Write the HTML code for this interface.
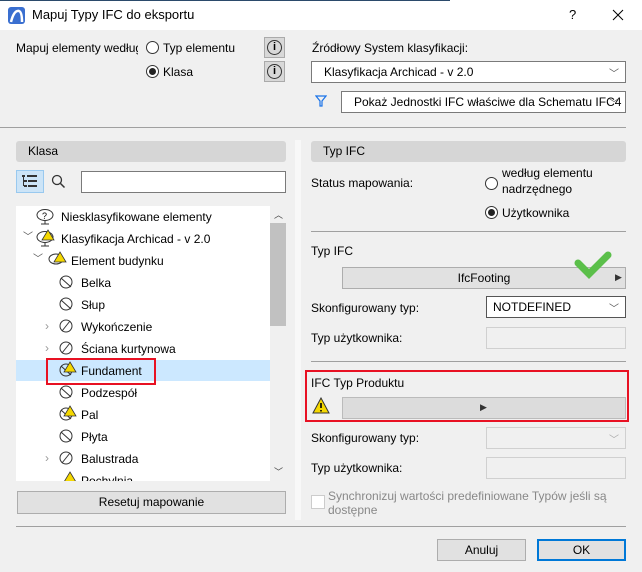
<!DOCTYPE html>
<html><head><meta charset="utf-8"><style>
*{box-sizing:border-box;margin:0;padding:0}
body{width:642px;height:572px;overflow:hidden;background:#f0f0f0;font-family:"Liberation Sans","DejaVu Sans",sans-serif;font-size:12px;color:#000;position:relative}
.a{position:absolute;white-space:nowrap}
.t{position:absolute;white-space:nowrap;line-height:14px}
.rad{position:absolute;width:13px;height:13px;border:1px solid #333;border-radius:50%;background:#fff}
.rad.on::after{content:"";position:absolute;left:2px;top:2px;width:7px;height:7px;border-radius:50%;background:#222}
.sel{position:absolute;background:#fff;border:1px solid #7a7a7a;height:22px;line-height:20px;padding-left:12px}
.chev{position:absolute;right:6px;top:3px;font-size:10px;color:#555}
.btn{position:absolute;background:#e1e1e1;border:1px solid #adadad;text-align:center;line-height:20px}
.hdr{position:absolute;background:#d6d6d6;border-radius:3px;height:21px;line-height:21px;padding-left:12px}
.sep{position:absolute;height:1px;background:#a0a0a0}
.dis{position:absolute;background:#f0f0f0;border:1px solid #d0d0d0}
</style></head><body>
<div class="a" style="left:0;top:0;width:642px;height:30px;background:#fff"></div>
<div class="a" style="left:0;top:0;width:450px;height:1px;background:#2b4a6b"></div>
<svg class="a" style="left:8px;top:7px" width="17" height="17"><rect width="17" height="17" rx="3" fill="#3a6fd0"/><path d="M3 15 Q6 3 11 4 Q14 5 14 15" fill="none" stroke="#fff" stroke-width="2.5"/></svg>
<div class="t" style="left:32px;top:8px;font-size:13px">Mapuj Typy IFC do eksportu</div>
<div class="t" style="left:569px;top:8px;font-size:13px">?</div>
<svg class="a" style="left:612px;top:9px" width="12" height="12"><path d="M1 1 L11 11 M11 1 L1 11" stroke="#000" stroke-width="1"/></svg>

<div class="t" style="left:16px;top:41px;width:122px;overflow:hidden">Mapuj elementy według</div>
<div class="rad" style="left:146px;top:41px"></div><div class="t" style="left:163px;top:41px">Typ elementu</div>
<div class="rad on" style="left:146px;top:65px"></div><div class="t" style="left:163px;top:65px">Klasa</div>
<div class="a" style="left:264px;top:37px;width:21px;height:21px;background:#d8d8d8;border:1px solid #aaa"><div style="margin:2px;width:15px;height:15px;border:1.5px solid #333;border-radius:50%;text-align:center;font-size:11px;line-height:13px;font-weight:bold">i</div></div>
<div class="a" style="left:264px;top:61px;width:21px;height:21px;background:#d8d8d8;border:1px solid #aaa"><div style="margin:2px;width:15px;height:15px;border:1.5px solid #333;border-radius:50%;text-align:center;font-size:11px;line-height:13px;font-weight:bold">i</div></div>

<div class="t" style="left:312px;top:41px">Źródłowy System klasyfikacji:</div>
<div class="sel" style="left:311px;top:61px;width:315px">Klasyfikacja Archicad - v 2.0<span class="chev">﹀</span></div>
<svg class="a" style="left:315px;top:95px" width="12" height="12"><path d="M1 1 H11 L7 6 V11 H5 V6 Z" fill="none" stroke="#1a73e8" stroke-width="1.2"/></svg>
<div class="sel" style="left:341px;top:91px;width:285px">Pokaż Jednostki IFC właściwe dla Schematu IFC4<span class="chev">﹀</span></div>
<div class="sep" style="left:0;top:127px;width:626px"></div>

<div class="hdr" style="left:16px;top:141px;width:270px">Klasa</div>
<div class="a" style="left:16px;top:170px;width:28px;height:23px;background:#cce4f7;border:1px solid #99c9ef"></div>
<svg class="a" style="left:22px;top:175px" width="16" height="13"><g fill="#333"><rect x="0" y="0" width="3" height="2"/><rect x="5" y="0" width="10" height="2"/><rect x="2" y="5" width="3" height="2"/><rect x="6" y="5" width="9" height="2"/><rect x="2" y="10" width="3" height="2"/><rect x="6" y="10" width="9" height="2"/><rect x="1" y="2" width="1" height="9"/></g></svg>
<svg class="a" style="left:51px;top:174px" width="15" height="15"><circle cx="6" cy="6" r="4.5" fill="none" stroke="#333" stroke-width="1.3"/><path d="M9.5 9.5 L13.5 13.5" stroke="#333" stroke-width="1.5"/></svg>
<div class="a" style="left:81px;top:171px;width:205px;height:22px;background:#fff;border:1px solid #7a7a7a"></div>

<div class="a" style="left:16px;top:206px;width:254px;height:275px;background:#fff;overflow:hidden"></div>
<div class="a" style="left:16px;top:360px;width:254px;height:21px;background:#cce8ff"></div>
<div class="a" style="left:270px;top:206px;width:16px;height:275px;background:#f0f0f0"></div>
<div class="t" style="left:274px;top:208px;font-size:9px;color:#444">︿</div>
<div class="a" style="left:270px;top:223px;width:16px;height:103px;background:#c1c1c1"></div>
<div class="t" style="left:274px;top:465px;font-size:9px;color:#444">﹀</div>

<div class="t" style="left:61px;top:210px">Niesklasyfikowane elementy</div>
<div class="t" style="left:61px;top:232px">Klasyfikacja Archicad - v 2.0</div>
<div class="t" style="left:71px;top:254px">Element budynku</div>
<div class="t" style="left:81px;top:276px">Belka</div>
<div class="t" style="left:81px;top:298px">Słup</div>
<div class="t" style="left:81px;top:320px">Wykończenie</div>
<div class="t" style="left:81px;top:342px">Ściana kurtynowa</div>
<div class="t" style="left:81px;top:364px">Fundament</div>
<div class="t" style="left:81px;top:386px">Podzespół</div>
<div class="t" style="left:81px;top:408px">Pal</div>
<div class="t" style="left:81px;top:430px">Płyta</div>
<div class="t" style="left:81px;top:452px">Balustrada</div>
<div class="a" style="left:16px;top:474px;width:254px;height:7px;overflow:hidden"><div class="t" style="left:65px;top:0">Pochylnia</div></div>
<div class="t" style="left:23px;top:231px;color:#555;font-size:10px">﹀</div>
<div class="t" style="left:33px;top:253px;color:#555;font-size:10px">﹀</div>
<div class="t" style="left:45px;top:319px;color:#999">›</div>
<div class="t" style="left:45px;top:341px;color:#999">›</div>
<div class="t" style="left:45px;top:451px;color:#999">›</div>

<svg class="a" style="left:36px;top:209px" width="240" height="272">
<g fill="none" stroke="#333" stroke-width="1">
<ellipse cx="9" cy="6" rx="8" ry="5.5"/><path d="M9 12 V15 M5 15 H13"/>
<ellipse cx="9" cy="28" rx="8" ry="5.5"/><path d="M9 34 V37 M5 37 H13"/>
<ellipse cx="20" cy="50" rx="7" ry="5"/>
<circle cx="30" cy="73" r="6"/><path d="M25 69 L35 78"/>
<circle cx="30" cy="95" r="6"/><path d="M25 91 L35 100"/>
<circle cx="30" cy="117" r="6"/><path d="M26 122 L34 112"/>
<circle cx="30" cy="139" r="6"/><path d="M26 144 L34 134"/>
<circle cx="30" cy="161" r="6"/><path d="M25 157 L35 166"/>
<circle cx="30" cy="183" r="6"/><path d="M25 179 L35 188"/>
<circle cx="30" cy="205" r="6"/><path d="M25 201 L35 210"/>
<circle cx="30" cy="227" r="6"/><path d="M25 223 L35 232"/>
<circle cx="30" cy="249" r="6"/><path d="M26 254 L34 244"/>
</g>
<text x="6" y="10" font-size="9" font-family="Liberation Sans">?</text>
<g fill="#f5d800" stroke="#333" stroke-width="0.8">
<path d="M12 21 L18 31 H6 Z"/><path d="M24 43 L30 53 H18 Z"/><path d="M34 153 L40 163 H28 Z"/><path d="M34 197 L40 207 H28 Z"/><path d="M34 263 L40 273 H28 Z"/>
</g></svg>
<div class="a" style="left:46px;top:358px;width:110px;height:27px;border:2px solid #e81123"></div>
<div class="btn" style="left:17px;top:491px;width:269px;height:23px">Resetuj mapowanie</div>

<div class="a" style="left:295px;top:140px;width:6px;height:380px;background:#f8f8f8"></div>
<div class="hdr" style="left:311px;top:141px;width:315px">Typ IFC</div>
<div class="t" style="left:311px;top:176px">Status mapowania:</div>
<div class="rad" style="left:485px;top:177px"></div>
<div class="t" style="left:502px;top:166px">według elementu</div>
<div class="t" style="left:502px;top:182px">nadrzędnego</div>
<div class="rad on" style="left:485px;top:206px"></div><div class="t" style="left:502px;top:206px">Użytkownika</div>
<div class="sep" style="left:311px;top:231px;width:315px"></div>
<div class="t" style="left:311px;top:244px">Typ IFC</div>
<div class="btn" style="left:342px;top:267px;width:284px;height:22px">IfcFooting</div>
<div class="t" style="left:615px;top:270px;font-size:9px;color:#333">▶</div>
<svg class="a" style="left:572px;top:250px" width="40" height="30"><path d="M6 13 L17 24 L36 5" fill="none" stroke="#5bbf4a" stroke-width="7" stroke-linecap="round"/></svg>
<div class="t" style="left:311px;top:301px">Skonfigurowany typ:</div>
<div class="sel" style="left:486px;top:296px;width:140px;border-color:#555;padding-left:6px">NOTDEFINED<span class="chev">﹀</span></div>
<div class="t" style="left:311px;top:331px">Typ użytkownika:</div>
<div class="dis" style="left:486px;top:327px;width:140px;height:22px"></div>
<div class="sep" style="left:311px;top:361px;width:315px"></div>
<div class="a" style="left:305px;top:370px;width:324px;height:52px;border:2px solid #e81123"></div>
<div class="t" style="left:311px;top:376px">IFC Typ Produktu</div>
<svg class="a" style="left:312px;top:397px" width="18" height="17"><path d="M9 1 L17 16 H1 Z" fill="#f5d800" stroke="#333"/><path d="M9 6 V11 M9 13 V14.5" stroke="#000" stroke-width="1.6"/></svg>
<div class="btn" style="left:342px;top:397px;width:284px;height:22px;background:#dcdcdc;border-color:#bbb"></div>
<div class="t" style="left:480px;top:400px;font-size:9px;color:#333">▶</div>
<div class="t" style="left:311px;top:431px">Skonfigurowany typ:</div>
<div class="dis" style="left:486px;top:427px;width:140px;height:22px"><span class="chev" style="color:#aaa">﹀</span></div>
<div class="t" style="left:311px;top:461px">Typ użytkownika:</div>
<div class="dis" style="left:486px;top:457px;width:140px;height:22px"></div>
<div class="a" style="left:311px;top:495px;width:14px;height:14px;background:#fff;border:1px solid #ccc"></div>
<div class="t" style="left:328px;top:489px;color:#888">Synchronizuj wartości predefiniowane Typów jeśli są</div>
<div class="t" style="left:328px;top:503px;color:#888">dostępne</div>

<div class="sep" style="left:16px;top:526px;width:610px"></div>
<div class="btn" style="left:437px;top:539px;width:89px;height:22px">Anuluj</div>
<div class="btn" style="left:537px;top:539px;width:89px;height:22px;border:2px solid #0078d7;line-height:18px">OK</div>
</body></html>
